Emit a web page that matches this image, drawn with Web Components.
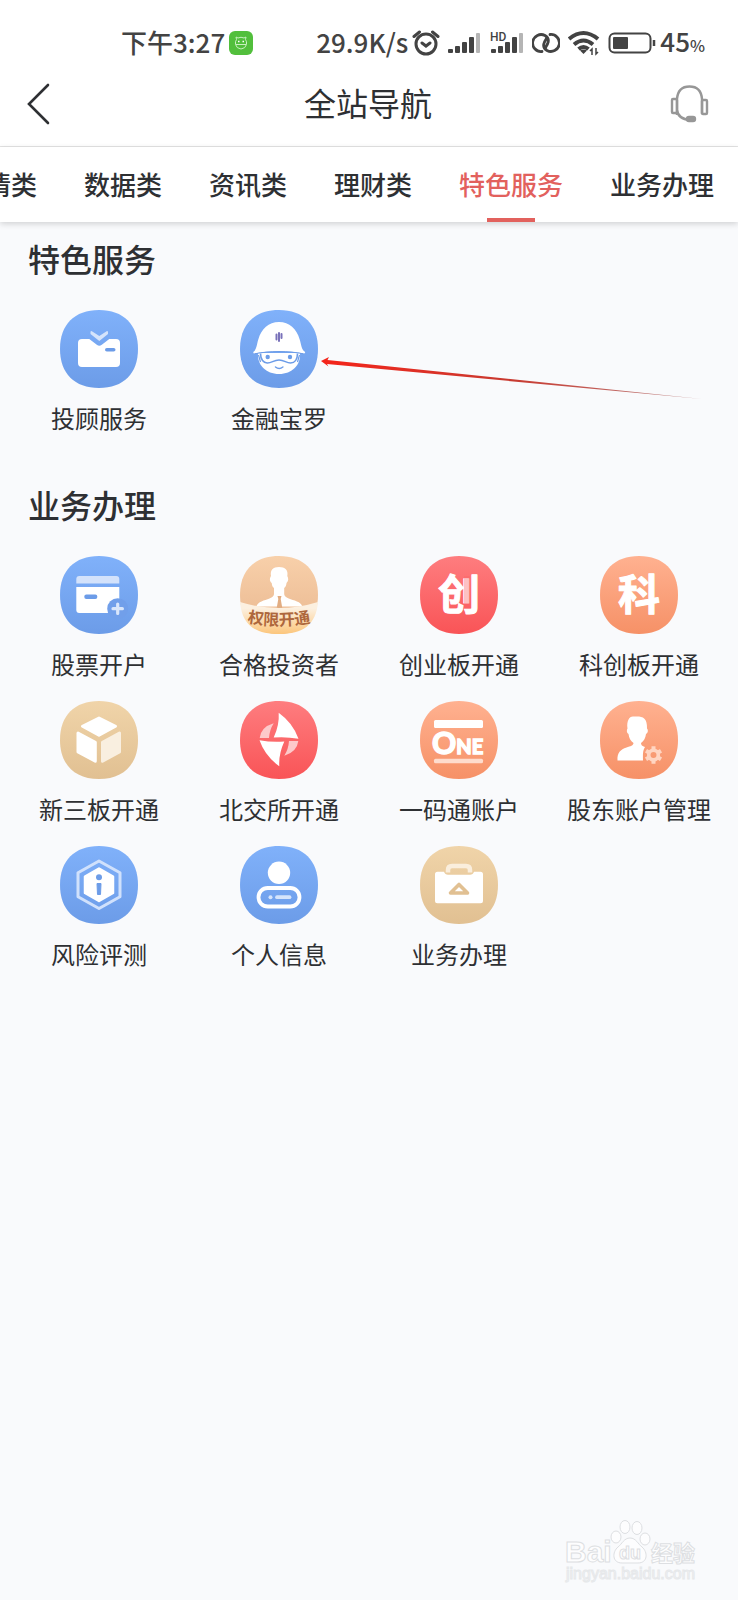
<!DOCTYPE html>
<html lang="zh-CN">
<head>
<meta charset="utf-8">
<meta name="viewport" content="width=device-width, initial-scale=1">
<title>全站导航</title>
<style>
    body {
        margin: 0;
        background: #f9fafc;
        color: #2e3033;
        font-family: "Noto Sans CJK SC", sans-serif;
    }
</style>
</head>
<body>
<app-page>
    <status-bar></status-bar>
    <title-bar>全站导航</title-bar>
    <tab-bar>
        <a href="#quotes">行情类</a>
        <a href="#data">数据类</a>
        <a href="#news">资讯类</a>
        <a href="#wealth">理财类</a>
        <a href="#special" class="active" aria-current="true">特色服务</a>
        <a href="#business">业务办理</a>
    </tab-bar>
    <nav-section id="special" heading="特色服务">
        <nav-tile icon="folder" tone="blue">投顾服务</nav-tile>
        <nav-tile icon="helmet" tone="blue">金融宝罗<red-arrow slot="mark"></red-arrow></nav-tile>
    </nav-section>
    <nav-section id="business" heading="业务办理">
        <nav-tile icon="card" tone="blue">股票开户</nav-tile>
        <nav-tile icon="investor" tone="peach">合格投资者</nav-tile>
        <nav-tile icon="chuang" tone="red">创业板开通</nav-tile>
        <nav-tile icon="ke" tone="orange">科创板开通</nav-tile>
        <nav-tile icon="cube" tone="gold">新三板开通</nav-tile>
        <nav-tile icon="bolt" tone="red">北交所开通</nav-tile>
        <nav-tile icon="one" tone="orange">一码通账户</nav-tile>
        <nav-tile icon="holder" tone="orange">股东账户管理</nav-tile>
        <nav-tile icon="risk" tone="blue">风险评测</nav-tile>
        <nav-tile icon="person" tone="blue">个人信息</nav-tile>
        <nav-tile icon="briefcase" tone="gold">业务办理</nav-tile>
    </nav-section>
    <water-mark slot="footer"></water-mark>
</app-page>

<script>
// 图标底色渐变
const TONES = {
    blue: ['#80b1fa', '#6c9ce8'],
    red: ['#fe7d7f', '#f95457'],
    orange: ['#ffb190', '#f69167'],
    gold: ['#f0d4a9', '#e1c092'],
    peach: ['#f8d0aa', '#e9b78f']
};

// 图标内容，画布 78x78，c 为底色
const ICONS = {
    folder: c => `
        <path d="M22 29h7.300l7.500 5.800q2.500 1.800 5 0L49.300 29H56q4 0 4 4v20q0 4-4 4H22q-4 0-4-4V33q0-4 4-4z" fill="#fff"/>
        <path d="M30.500 21.500v2.500l8.800 7 8.700-7v-2.500l-1-.5-7.700 5-7.800-5z" fill="#d5e4fb"/>
        <rect x="45" y="38" width="10.500" height="3.600" rx="1.800" fill="${c}"/>`,
    helmet: c => `
        <path d="M18 43h42c1 12-8 21-21 21S17 55 18 43z" fill="#fff"/>
        <path d="M13.300 42c3.500-2.500 3.500-8 5-12.500C21.500 18.500 28.500 12 39 12s17.500 6.500 20.700 17.500c1.500 4.500 1.500 10 5.500 12.500-.2 1.200-.8 1.500-1.700 1.500-15.500-3-33.500-3-49 0-.8 0-1.200-.4-1.200-1.500z" fill="#fff"/>
        <path d="M14.500 43.800c15.500-3 33.500-3 49 0" fill="none" stroke="${c}" stroke-width="1"/>
        <path d="M20.500 43.500c0 6 3 9.700 7 9.500 4.500 0 6-3 11.500-3s7 3 11.500 3c4 0 7-3.500 7-9.500" fill="none" stroke="${c}" stroke-width="1.600"/>
        <path d="M18.500 45l2 7M59.500 45l-2 7" stroke="${c}" stroke-width="1.200"/>
        <circle cx="27.700" cy="47" r="2.200" fill="${c}"/>
        <circle cx="50" cy="47" r="2.200" fill="${c}"/>
        <path d="M35.500 57q3.700 3 7.400 0" fill="none" stroke="${c}" stroke-width="1.500" stroke-linecap="round"/>
        <path d="M36.500 24.500v5M39 23v8M41.500 24v4" fill="none" stroke="#7a72ba" stroke-width="2" stroke-linecap="round"/>`,
    card: c => `
        <path d="M16.300 27.500V23q0-3 3-3h37q3 0 3 3v4.500z" fill="#d3e2fb"/>
        <path d="M16.300 31h43v26h-40q-3 0-3-3z" fill="#fff"/>
        <rect x="24.300" y="38.500" width="13" height="4.500" rx="2" fill="${c}"/>
        <circle cx="57.700" cy="52.700" r="10.500" fill="#719fea"/>
        <path d="M57.700 48v9.400M53 52.700h9.400" stroke="#d9e6fb" stroke-width="3.200" stroke-linecap="round"/>`,
    investor: () => `
        <path d="M16.500 50.500c1-5 8-6 13-8 3-1.300 4.500-2.500 4.500-4.500v-6c-1.700-1-2-3-2.300-5-2.500-2-2-5-.7-7-1-6 2-9 8-9s9.500 3 8.300 9c1.200 2 1.500 5-.8 7-.2 2-.8 4-2.300 5v6c0 2 1.500 3.200 4.500 4.500 5 2 12.500 3 13.500 8z" fill="#fff"/>
        <path d="M37.500 40h4l-.8 3 1.600 9h-5.600l1.600-9z" fill="#e2ad82"/>
        <path d="M0 46q39 12 78 0C76 69 63 78 39 78S2 69 0 46z" fill="url(#banner)"/>
        <path id="arc" d="M5 66q34 7 68 0" fill="none"/>
        <text font-size="16" font-weight="700" fill="#ae673c" text-anchor="middle"><textPath href="#arc" startOffset="50%">权限开通</textPath></text>`,
    chuang: () => `
        <text x="39" y="54" font-size="42" font-weight="700" fill="#fff" stroke="#fff" stroke-linejoin="round" text-anchor="middle">创</text>
        <rect x="44" y="20" width="6" height="28" fill="#fb6769" fill-opacity="0.400"/>`,
    ke: () => `
        <text x="39" y="54" font-size="42" font-weight="700" fill="#fff" stroke="#fff" stroke-linejoin="round" text-anchor="middle">科</text>`,
    cube: () => `
        <g stroke-width="3" stroke-linejoin="round">
            <path d="M22.500 25.300L39 17l16.500 8.300L39 34.300z" fill="#fff" stroke="#fff"/>
            <path d="M18 32l17.300 9.200v19L18 51z" fill="#fff" stroke="#fff"/>
            <path d="M42.500 41.200L59.500 32v19l-17 9.200z" fill="#f9efe0" stroke="#f9efe0"/>
        </g>`,
    bolt: () => `
        <g id="half">
            <path d="M38.700 11.700Q53 22 58.500 37.700 46 35.500 33.700 36.500 39.500 24 38.700 11.700z" fill="#fff"/>
            <path d="M33.700 22.300Q21 26 19.700 37h9.300q.5-8 4.700-14.700z" fill="#fdc9ca"/>
        </g>
        <use href="#half" transform="rotate(180 39 38.500)"/>`,
    one: () => `
        <rect x="14" y="19" width="49" height="8" rx="1.500" fill="#fff"/>
        <text x="12" y="53" font-family="Lato, sans-serif" font-weight="700" font-size="30" fill="#fff" stroke="#fff" stroke-width="1.500">O<tspan font-size="20">NE</tspan></text>
        <rect x="14" y="57.700" width="49" height="4.500" rx="1.500" fill="#fedccd"/>`,
    holder: () => `
        <path d="M17.500 59.500c-.5-8 3-11 9-13 4-1.300 7-2 7-4.500-3-2-4.500-5-5-9-2-1-2-4-1-5.500-1-8 2-12.500 6-12 8-.5 14 0 13.500 12 1.500 1.500 1 4.500-1 5.500-.5 4-2 7-5 9 0 2 1 3 4 4-2.500 4-2 8-2 13.500z" fill="#fff"/>
        <g stroke="#ffd5c2" fill="none">
            <circle cx="53.500" cy="54" r="4.800" stroke-width="3.600"/>
            <path d="M53.500 45.300v4M53.500 58.700v4M46 49.700l3.300 2M57.700 56.300l3.300 2M46 58.300l3.300-2M57.700 51.700l3.300-2" stroke-width="4"/>
        </g>`,
    risk: c => `
        <path d="M39 15l21 11.800v24L39 62.500 18 50.800v-24z" fill="none" stroke="#d0e1fc" stroke-width="3" stroke-linejoin="round"/>
        <path d="M39 22.500l14 8v16.500l-14 8-14-8V30.500z" fill="#fff" stroke="#fff" stroke-width="2.500" stroke-linejoin="round"/>
        <circle cx="39" cy="31.300" r="3" fill="${c}"/>
        <path d="M37 37.500h4l-.5 11h-3z" fill="${c}" stroke="${c}" stroke-linejoin="round"/>`,
    person: () => `
        <circle cx="39" cy="26.800" r="11.200" fill="#fff"/>
        <rect x="18.500" y="42" width="41" height="18.500" rx="9.250" fill="none" stroke="#fff" stroke-width="3.800"/>
        <circle cx="30.500" cy="51.200" r="2" fill="#d5e4fb"/>
        <path d="M37 51.200h12.500" stroke="#d5e4fb" stroke-width="3.800" stroke-linecap="round"/>`,
    briefcase: c => `
        <path d="M17.500 25.700h6.500q1 3 4 3h22q3 0 4-3h6.500q2.500 0 2.500 2.500v26.500q0 2.500-2.500 2.500h-43q-2.500 0-2.500-2.500V28.200q0-2.500 2.500-2.500z" fill="#fff"/>
        <path d="M28 26.500V24q0-4 4-4h14q4 0 4 4v2.500" fill="none" stroke="#faeedd" stroke-width="4.500"/>
        <path d="M39 38.500l8.500 8.500h-17z" fill="#fff" stroke="${c}" stroke-width="3.600" stroke-linejoin="round"/>`
};

// 页面容器
class AppPage extends HTMLElement {
    constructor() {
        super();
        this.attachShadow({mode: 'open'}).innerHTML = `
            <style>
                :host {
                    display: flex;
                    flex-direction: column;
                    min-height: 100vh;
                    overflow: hidden;
                }
                footer {
                    display: flex;
                    justify-content: flex-end;
                    margin-top: auto;
                    padding: 24px 36px 16px;
                }
            </style>
            <slot></slot>
            <footer><slot name="footer"></slot></footer>
        `;
    }
}

// 手机状态栏
class StatusBar extends HTMLElement {
    constructor() {
        super();
        this.attachShadow({mode: 'open'}).innerHTML = `
            <style>
                :host {
                    display: flex;
                    align-items: center;
                    justify-content: space-between;
                    height: 38px;
                    padding: 24px 33px 0 121px;
                    background: #fff;
                    color: #434343;
                    font-size: 26px;
                    font-weight: 500;
                    line-height: 36px;
                    white-space: nowrap;
                }
                svg {
                    display: block;
                    flex: none;
                }
                span {
                    padding-bottom: 2px;
                }
                .time, .state, .level {
                    display: flex;
                    align-items: center;
                }
                .time {
                    gap: 4px;
                }
                .state {
                    gap: 8px;
                }
                .speed {
                    display: flex;
                    align-items: center;
                    gap: 4px;
                }
                .level {
                    align-items: baseline;
                    margin-left: -4px;
                }
                small {
                    font-size: 16px;
                }
            </style>
            <div class="time">
                <span>下午3:27</span>
                <svg width="24" height="24" viewBox="0 0 24 24">
                    <rect width="24" height="24" rx="6" fill="#52bf3c"/>
                    <path d="M7.500 8.500L7 6l2 1q3-1.500 6 0l2-1-.5 2.500q1.500 2 1 5-1 4-5.500 4.500-4.500-.5-5.500-4.500-.5-3 1-5zM7 13.500h10" fill="none" stroke="#c9f0c0"/>
                    <path d="M9 10.500h1.500M13.500 10.500h1.500" stroke="#fff" stroke-width="1.500"/>
                </svg>
            </div>
            <div class="state">
                <div class="speed">
                    <span>29.9K/s</span>
                    <svg width="28" height="26" viewBox="0 0 28 26" fill="none" stroke="#434343" stroke-width="3" stroke-linecap="round">
                        <circle cx="14" cy="14" r="10"/>
                        <path d="M2 6.500L7.500 2M26 6.500L20.500 2M10 13l4 3 4-3"/>
                    </svg>
                </div>
                <svg width="33" height="22" viewBox="0 0 33 22" fill="#434343">
                    <rect x="0" y="17" width="5" height="4" rx="1"/>
                    <rect x="7" y="14" width="5" height="7" rx="1"/>
                    <rect x="14" y="10" width="5" height="11" rx="1"/>
                    <rect x="21" y="5" width="5" height="16" rx="1"/>
                    <rect x="28" y="1" width="4" height="20" rx="1" fill="#b5b5b5"/>
                </svg>
                <svg width="35" height="30" viewBox="0 0 35 30" fill="#434343">
                    <text x="1" y="13" font-family="Roboto, sans-serif" font-size="12" font-weight="500">HD</text>
                    <rect x="2" y="21" width="5" height="4" rx="1"/>
                    <rect x="9" y="18" width="5" height="7" rx="1"/>
                    <rect x="16" y="14" width="5" height="11" rx="1"/>
                    <rect x="23" y="9" width="5" height="16" rx="1"/>
                    <rect x="30" y="5" width="4" height="20" rx="1" fill="#b5b5b5"/>
                </svg>
                <svg width="28" height="22" viewBox="0 0 28 22" fill="none" stroke="#434343" stroke-width="2.800" stroke-linecap="round">
                    <path id="loop" d="M10 19.500A8.500 8.500 0 1 1 13 3.500q5 3 2.500 8.500l-2 3.500"/>
                    <use href="#loop" transform="rotate(180 14 11)"/>
                </svg>
                <svg width="32" height="26" viewBox="0 0 32 26" fill="none" stroke="#434343" stroke-width="4">
                    <path d="M1 9q14.500-12 29 0M6 14.500q9.500-8 19 0M10.500 19q5-4 10 0"/>
                    <path d="M12 20.500q3.500-2 7 0L15.500 24z" fill="#434343" stroke="none"/>
                    <path d="M24 25v-6l-2 2M28 18v6l2-2" stroke-width="1.500"/>
                </svg>
                <svg width="48" height="22" viewBox="0 0 48 22" fill="none" stroke="#434343" stroke-width="2">
                    <rect x="1.500" y="1.500" width="41" height="19" rx="5"/>
                    <rect x="5" y="5" width="15" height="12" rx="1" fill="#434343" stroke="none"/>
                    <path d="M46 8v6" stroke-width="2.500"/>
                </svg>
                <div class="level"><span>45</span><small>%</small></div>
            </div>
        `;
    }
}

// 标题栏
class TitleBar extends HTMLElement {
    constructor() {
        super();
        this.attachShadow({mode: 'open'}).innerHTML = `
            <style>
                :host {
                    display: grid;
                    grid-template-columns: 1fr auto 1fr;
                    align-items: center;
                    height: 84px;
                    padding: 0 28px 0 26px;
                    background: #fff;
                    border-bottom: 1px solid #e4e4e4;
                }
                h1 {
                    margin: 0;
                    padding-bottom: 4px;
                    font-size: 32px;
                    font-weight: 400;
                    line-height: 48px;
                }
                button {
                    display: block;
                    justify-self: start;
                    padding: 0;
                    border: 0;
                    background: none;
                    cursor: pointer;
                }
                button.service {
                    justify-self: end;
                }
                svg {
                    display: block;
                }
            </style>
            <button type="button" aria-label="返回">
                <svg width="24" height="42" viewBox="0 0 24 42" fill="none" stroke="#2e3033" stroke-width="2.600" stroke-linecap="round">
                    <path d="M22 2L3 21l19 19"/>
                </svg>
            </button>
            <h1><slot></slot></h1>
            <button type="button" class="service" aria-label="客服">
                <svg width="40" height="40" viewBox="0 0 40 40" fill="none" stroke="#979797" stroke-width="2.400">
                    <path d="M7 31V15Q8 2.500 19.500 2.500T32 15v15M7 26q1 9 13 10"/>
                    <rect x="2" y="15" width="5" height="14" rx="1"/>
                    <rect x="32" y="16" width="5" height="14" rx="1"/>
                    <rect x="17" y="33" width="8" height="4" rx="2" fill="#979797"/>
                </svg>
            </button>
        `;
    }
}

// 分类标签栏，停在最右侧
class TabBar extends HTMLElement {
    constructor() {
        super();
        this.attachShadow({mode: 'open'}).innerHTML = `
            <style>
                :host {
                    display: block;
                    background: #fff;
                    box-shadow: 0 2px 6px rgba(0, 0, 0, 0.16);
                    overflow: hidden;
                    z-index: 1;
                }
                nav {
                    display: flex;
                    justify-content: flex-end;
                    gap: 47px;
                    padding-right: 24px;
                }
                ::slotted(a) {
                    flex: none;
                    height: 75px;
                    color: #2e3033;
                    font-size: 26px;
                    font-weight: 500;
                    line-height: 73px;
                    text-decoration: none;
                }
                ::slotted(a.active) {
                    color: #e2615d;
                    background: linear-gradient(#e2615d, #e2615d) center bottom / 48px 4px no-repeat;
                }
            </style>
            <nav aria-label="分类"><slot></slot></nav>
        `;
    }

    connectedCallback() {
        const tabs = this.querySelectorAll('a');
        tabs.forEach(tab => {
            tab.addEventListener('click', () => {
                tabs.forEach(t => t.classList.remove('active'));
                tab.classList.add('active');
            });
        });
    }
}

// 分组：标题 + 四列图标
class NavSection extends HTMLElement {
    constructor() {
        super();
        this.attachShadow({mode: 'open'}).innerHTML = `
            <style>
                :host {
                    display: block;
                    padding: 12px 9px 34px;
                }
                h2 {
                    margin: 0 0 28px;
                    padding-left: 19px;
                    font-size: 32px;
                    font-weight: 500;
                    line-height: 48px;
                }
                .grid {
                    display: grid;
                    grid-template-columns: repeat(4, 1fr);
                    row-gap: 21px;
                }
            </style>
            <h2></h2>
            <div class="grid"><slot></slot></div>
        `;
    }

    connectedCallback() {
        this.shadowRoot.querySelector('h2').textContent = this.getAttribute('heading');
    }
}

// 单个入口
class NavTile extends HTMLElement {
    connectedCallback() {
        const [top, bottom] = TONES[this.getAttribute('tone')];
        const draw = ICONS[this.getAttribute('icon')];
        this.attachShadow({mode: 'open'}).innerHTML = `
            <style>
                :host {
                    display: block;
                    position: relative;
                }
                a {
                    display: flex;
                    flex-direction: column;
                    align-items: center;
                    gap: 14px;
                    color: inherit;
                    font-size: 24px;
                    line-height: 32px;
                    text-decoration: none;
                    white-space: nowrap;
                }
                svg {
                    display: block;
                }
            </style>
            <a href="#${this.getAttribute('icon')}">
                <svg width="78" height="78" viewBox="0 0 78 78" aria-hidden="true">
                    <defs>
                        <linearGradient id="tone" x2="0" y2="1">
                            <stop stop-color="${top}"/><stop offset="1" stop-color="${bottom}"/>
                        </linearGradient>
                        <linearGradient id="banner" x2="0" y2="1">
                            <stop offset="0.200" stop-color="#fcf0e0"/><stop offset="1" stop-color="#fcc67c"/>
                        </linearGradient>
                    </defs>
                    <path d="M39 0C63.500 0 78 14.500 78 39S63.500 78 39 78 0 63.500 0 39 14.500 0 39 0z" fill="url(#tone)"/>
                    ${draw(bottom)}
                </svg>
                <span><slot></slot></span>
            </a>
            <slot name="mark"></slot>
        `;
    }
}

// 指向图标的红色箭头，浮在网格上面
class RedArrow extends HTMLElement {
    constructor() {
        super();
        this.attachShadow({mode: 'open'}).innerHTML = `
            <style>
                :host {
                    position: absolute;
                    top: 44px;
                    left: calc(50% + 42px);
                    pointer-events: none;
                }
                svg {
                    display: block;
                }
            </style>
            <svg width="384" height="48" viewBox="0 0 384 48">
                <defs>
                    <linearGradient id="fade"><stop stop-color="#f5241a"/><stop offset="0.500" stop-color="#c83a30"/><stop offset="1" stop-color="#b88"/></linearGradient>
                </defs>
                <path d="M0 7l8-4-1.500 3L381 45 6 10l1.500 2.500z" fill="url(#fade)"/>
            </svg>
        `;
    }
}

// 右下角水印
class WaterMark extends HTMLElement {
    constructor() {
        super();
        this.attachShadow({mode: 'open'}).innerHTML = `
            <style>
                :host {
                    display: block;
                }
                svg {
                    display: block;
                }
            </style>
            <svg width="138" height="68" viewBox="0 0 138 68" fill="#fdfdfe" stroke="#dddfe2" stroke-width="1">
                <g font-family="Liberation Sans, Noto Sans CJK SC, sans-serif" font-weight="700">
                    <text x="1" y="46" font-size="30">Bai</text>
                    <ellipse cx="52" cy="21" rx="5" ry="6"/>
                    <ellipse cx="61" cy="11" rx="5" ry="6.500"/>
                    <ellipse cx="73" cy="12" rx="5" ry="6.500"/>
                    <ellipse cx="81" cy="23" rx="5" ry="6"/>
                    <path d="M66 22c6 0 8 6 12 9 6 5 6 16-4 16h-16c-10 0-10-11-4-16 4-3 6-9 12-9z"/>
                    <text x="66" y="43" font-size="18" text-anchor="middle">du</text>
                    <text x="87" y="45" font-family="Noto Sans CJK SC, sans-serif" font-size="22">经验</text>
                </g>
                <text x="2" y="63" font-family="Liberation Sans, sans-serif" font-size="16" fill="#f6f7f9" stroke="#e6e8ea">jingyan.baidu.com</text>
            </svg>
        `;
    }
}

// 注册自定义元素
customElements.define('app-page', AppPage);
customElements.define('status-bar', StatusBar);
customElements.define('title-bar', TitleBar);
customElements.define('tab-bar', TabBar);
customElements.define('nav-section', NavSection);
customElements.define('nav-tile', NavTile);
customElements.define('red-arrow', RedArrow);
customElements.define('water-mark', WaterMark);
</script>
</body>
</html>
